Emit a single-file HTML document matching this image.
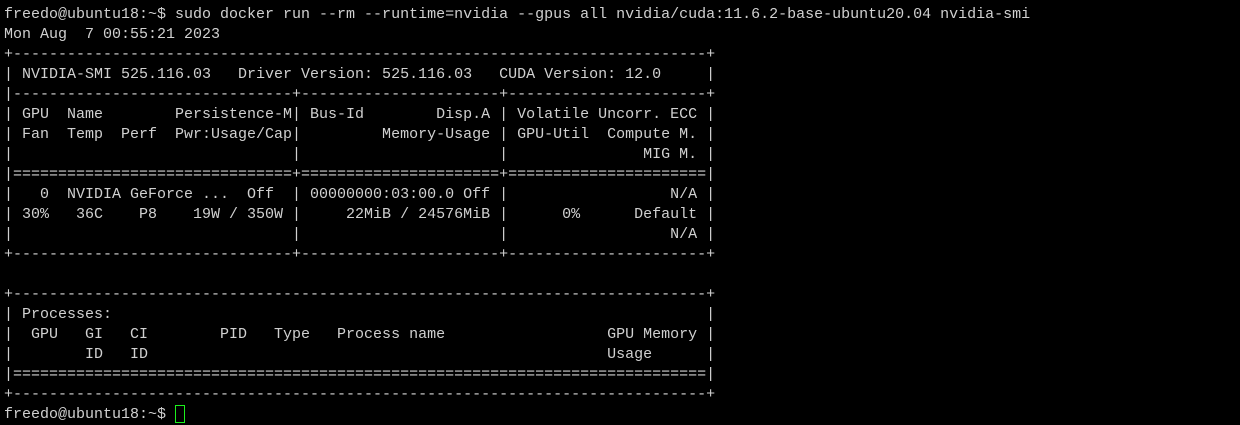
<!DOCTYPE html><html><head><style>
html,body{margin:0;background:#000;width:1240px;height:415px;overflow:hidden}
pre{margin:0;position:absolute;left:4px;top:5px;font:15px/20px "Liberation Mono",monospace;color:#d0d0d0}
.c{display:inline-block;width:8px;height:16px;border:1px solid #1cf01c;vertical-align:-5px;margin-left:0}
</style></head><body><pre>freedo@ubuntu18:~$ sudo docker run --rm --runtime=nvidia --gpus all nvidia/cuda:11.6.2-base-ubuntu20.04 nvidia-smi
Mon Aug  7 00:55:21 2023
+-----------------------------------------------------------------------------+
| NVIDIA-SMI 525.116.03   Driver Version: 525.116.03   CUDA Version: 12.0     |
|-------------------------------+----------------------+----------------------+
| GPU  Name        Persistence-M| Bus-Id        Disp.A | Volatile Uncorr. ECC |
| Fan  Temp  Perf  Pwr:Usage/Cap|         Memory-Usage | GPU-Util  Compute M. |
|                               |                      |               MIG M. |
|===============================+======================+======================|
|   0  NVIDIA GeForce ...  Off  | 00000000:03:00.0 Off |                  N/A |
| 30%   36C    P8    19W / 350W |     22MiB / 24576MiB |      0%      Default |
|                               |                      |                  N/A |
+-------------------------------+----------------------+----------------------+
                                                                               
+-----------------------------------------------------------------------------+
| Processes:                                                                  |
|  GPU   GI   CI        PID   Type   Process name                  GPU Memory |
|        ID   ID                                                   Usage      |
|=============================================================================|
+-----------------------------------------------------------------------------+
freedo@ubuntu18:~$ <span class="c"></span></pre></body></html>
